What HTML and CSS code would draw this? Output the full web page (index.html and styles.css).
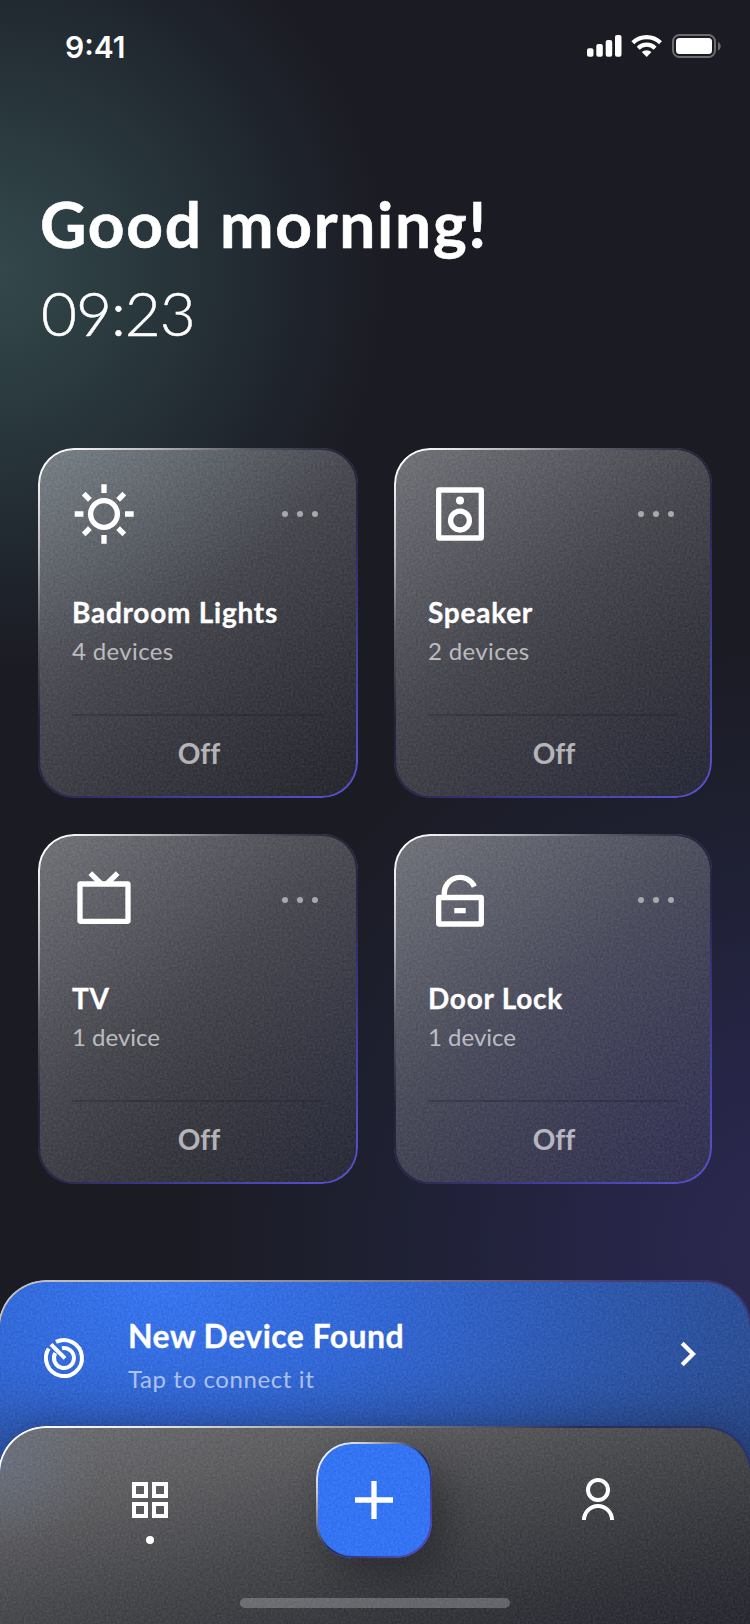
FILE: index.html
```html
<!DOCTYPE html>
<html lang="en">
<head>
<meta charset="utf-8">
<title>Smart Home</title>
<link rel="stylesheet" href="styles.css">
</head>
<body>
<svg class="defs" width="0" height="0" aria-hidden="true">
  <filter id="noise" x="0" y="0" width="100%" height="100%" color-interpolation-filters="sRGB">
    <feTurbulence type="fractalNoise" baseFrequency="0.45" numOctaves="2" seed="4"/>
    <feColorMatrix values="1.6 0 0 0 -0.45  1.6 0 0 0 -0.45  1.6 0 0 0 -0.42  0 0 0 0 1"/>
  </filter>
</svg>
<div class="screen">
  <header class="status">
    <span class="clock">9:41</span>
    <svg class="status-icons" width="136" height="26" viewBox="0 0 136 26" fill="#fff">
      <rect x="0" y="15.300" width="6.500" height="8.500" rx="2"/>
      <rect x="9.300" y="11" width="6.500" height="12.800" rx="2"/>
      <rect x="18.700" y="7" width="6.500" height="16.800" rx="2"/>
      <rect x="28" y="2" width="6.500" height="21.800" rx="2"/>
      <g fill="none" stroke="#fff" stroke-width="4.200">
        <path d="M45.800 9.700a20 20 0 0 1 27.700 0"/>
        <path d="M51.200 15.200a12 12 0 0 1 16.900 0"/>
      </g>
      <path d="M54.800 19.100a7 7 0 0 1 9.700 0l-4.850 4.800z"/>
      <rect x="86" y="2" width="42" height="22" rx="6.500" fill="none" stroke="#6c6c70" stroke-width="2"/>
      <rect x="89" y="5" width="36" height="16" rx="3.500"/>
      <path d="M131 9v8.500c3.600-1.500 3.600-7 0-8.500z" fill="#6c6c70"/>
    </svg>
  </header>

  <section class="greeting">
    <h1 class="hello">Good morning!</h1>
    <p class="time">09:23</p>
  </section>

  <main class="cards">
    <article class="card glass">
      <svg class="grain"><rect width="100%" height="100%" filter="url(#noise)"/></svg>
      <div class="card-top">
        <svg class="icon" width="64" height="64" viewBox="0 0 64 64" fill="none" stroke="#fff" stroke-width="5.300">
          <circle cx="32" cy="32" r="13.400"/>
          <path d="M32 2.300v8.700M32 53v8.700M2.700 32h8.700M53 32h8.700M11.700 11.700l6.200 6.200M46.100 46.100l6.200 6.200M52.300 11.700l-6.200 6.200M17.900 46.100l-6.200 6.200"/>
        </svg>
        <span class="dots"><i></i><i></i><i></i></span>
      </div>
      <h2 class="card-title">Badroom Lights</h2>
      <p class="card-sub plural">4 devices</p>
      <div class="card-foot">Off</div>
    </article>

    <article class="card glass">
      <svg class="grain"><rect width="100%" height="100%" filter="url(#noise)"/></svg>
      <div class="card-top">
        <svg class="icon" width="64" height="64" viewBox="0 0 64 64" fill="none" stroke="#fff" stroke-width="5.300">
          <rect x="10.700" y="8" width="42.600" height="48" rx="0.500" stroke-linejoin="round"/>
          <circle cx="32" cy="38.600" r="9.400"/>
          <circle cx="32" cy="18.600" r="4" fill="#fff" stroke="none"/>
        </svg>
        <span class="dots"><i></i><i></i><i></i></span>
      </div>
      <h2 class="card-title">Speaker</h2>
      <p class="card-sub plural">2 devices</p>
      <div class="card-foot">Off</div>
    </article>

    <article class="card glass">
      <svg class="grain"><rect width="100%" height="100%" filter="url(#noise)"/></svg>
      <div class="card-top">
        <svg class="icon" width="64" height="64" viewBox="0 0 64 64" fill="none" stroke="#fff" stroke-width="5.300">
          <rect x="8" y="16" width="48" height="37.300" rx="0.500" stroke-linejoin="round"/>
          <path d="M18.300 5.200l11 10.800M45.700 5.200L34.700 16"/>
        </svg>
        <span class="dots"><i></i><i></i><i></i></span>
      </div>
      <h2 class="card-title">TV</h2>
      <p class="card-sub">1 device</p>
      <div class="card-foot">Off</div>
    </article>

    <article class="card glass">
      <svg class="grain"><rect width="100%" height="100%" filter="url(#noise)"/></svg>
      <div class="card-top">
        <svg class="icon" width="64" height="64" viewBox="0 0 64 64" fill="none" stroke="#fff" stroke-width="5.300">
          <rect x="10.700" y="29.500" width="42.600" height="26.500" rx="0.500" stroke-linejoin="round"/>
          <path d="M16.300 29v-3.300a15.700 15.700 0 0 1 30-7.100M26.300 42.600h11.400"/>
        </svg>
        <span class="dots"><i></i><i></i><i></i></span>
      </div>
      <h2 class="card-title">Door Lock</h2>
      <p class="card-sub">1 device</p>
      <div class="card-foot">Off</div>
    </article>
  </main>

  <section class="found glass">
    <svg class="grain"><rect width="100%" height="100%" filter="url(#noise)"/></svg>
    <svg class="radar" width="48" height="48" viewBox="0 0 48 48" fill="none" stroke="#fff" stroke-width="4">
      <path d="M16 7.900A18 18 0 1 1 8.700 14.500"/>
      <path d="M22 14.200A10 10 0 1 1 15.300 19"/>
      <path d="M11 10.400L25 24.400"/>
    </svg>
    <div class="found-text">
      <h2 class="found-title">New Device Found</h2>
      <p class="found-sub">Tap to connect it</p>
    </div>
    <svg class="chevron" width="24" height="32" viewBox="0 0 24 32" fill="none" stroke="#fff" stroke-width="4.200">
      <path d="M5.200 5.200L16 16L5.200 26.800"/>
    </svg>
  </section>

  <nav class="nav glass">
    <svg class="grain"><rect width="100%" height="100%" filter="url(#noise)"/></svg>
    <div class="tab home">
      <svg width="36" height="36" viewBox="0 0 36 36" fill="none" stroke="#fff" stroke-width="4">
        <path d="M2 2h12v12H2zM22 2h12v12H22zM2 22h12v12H2zM22 22h12v12H22z"/>
      </svg>
      <i class="active-dot"></i>
    </div>
    <div class="add glass">
      <svg class="grain"><rect width="100%" height="100%" filter="url(#noise)"/></svg>
      <svg width="38" height="38" viewBox="0 0 38 38" stroke="#fff" stroke-width="5.300"><path d="M19 0v38M0 19h38"/></svg>
    </div>
    <div class="tab user">
      <svg width="32" height="42" viewBox="0 0 32 42" fill="none" stroke="#fff" stroke-width="4">
        <circle cx="16" cy="12" r="10"/>
        <path d="M2 42a14 14 0 0 1 28 0"/>
      </svg>
    </div>
    <i class="home-bar"></i>
  </nav>
</div>
</body>
</html>
```
FILE: styles.css
```css
* { box-sizing: border-box; margin: 0; padding: 0; }
body { background: #1b1b23; color: #fff; font-family: Lato, "Open Sans", sans-serif; font-variant-ligatures: none; }
.defs { position: absolute; }
.screen {
  display: flex; flex-direction: column;
  width: 750px; height: 1624px; overflow: hidden;
  background:
    radial-gradient(ellipse 400px 400px at -10px 270px, #34494d 0%, #28363b 42%, #1f242c 78%, rgba(27,27,35,0) 100%),
    radial-gradient(ellipse 620px 620px at 790px 1250px, #2d2950 0%, #262547 28%, #1e2031 68%, rgba(27,27,35,0) 100%),
    #1b1b23;
}

.status {
  display: flex; justify-content: space-between; align-items: flex-start;
  height: 180px; padding: 28px 27px 0 65px;
}
.clock { font: 600 30px/38px Inter, sans-serif; }
.status-icons { margin-top: 5px; }

.greeting { height: 268px; padding-left: 40px; }
.hello { font-size: 64px; line-height: 88px; font-weight: 700; letter-spacing: 1.7px; white-space: nowrap; -webkit-text-stroke: .6px #fff; }
.time { font-size: 62px; line-height: 88px; font-weight: 300; letter-spacing: -1px; padding-left: 1px; -webkit-text-stroke: .5px #fff; }

/* Frosted surface: grain plus a rim lit from the top left */
.glass { position: relative; isolation: isolate; }
.glass::before {
  content: ""; position: absolute; inset: 0; z-index: 1; padding: 2px; border-radius: inherit;
  background: linear-gradient(138deg, #fff 3%, #b4b4b8 17%, #5d5b68 29%, #262338 43%, #29264f 56%, #423e9c 76%, #5850cc 97%);
  mask: linear-gradient(#000 0 0) content-box exclude, linear-gradient(#000 0 0);
  pointer-events: none;
}
.grain {
  position: absolute; inset: 0; z-index: -1; width: 100%; height: 100%;
  border-radius: inherit; overflow: hidden; opacity: .07;
}

.cards { display: grid; grid-template-columns: 320px 318px; gap: 36px; padding-left: 38px; }
.card {
  height: 350px; padding: 34px; border-radius: 36px;
  background: linear-gradient(142deg, rgba(248,251,255,.4) 2%, rgba(248,251,255,.2) 46%, rgba(248,251,255,.13) 68%, rgba(248,251,255,.04) 100%);
}
.card-top { display: flex; align-items: center; gap: 146px; height: 64px; }
.icon { flex: none; }
.dots { display: flex; gap: 9px; }
.dots i { width: 6px; height: 6px; border-radius: 50%; background: #a9a9ac; }
.card-title { margin-top: 47px; font-size: 28px; line-height: 38px; font-weight: 700; letter-spacing: .75px; white-space: nowrap; -webkit-text-stroke: .3px #fff; }
.card-sub { margin-top: 1px; font-size: 24px; line-height: 38px; color: rgba(255,255,255,.64); }
.plural { letter-spacing: .35px; }
.card-foot {
  margin-top: 44px; padding: 12px 0 0 2px; border-top: 2px solid rgba(30,30,36,.3);
  font-size: 28px; line-height: 50px; font-weight: 700; text-align: center; color: rgba(255,255,255,.64);
}

.found {
  display: flex; align-items: flex-start; flex: none;
  height: 344px; margin-top: 96px; padding: 36px 49px 0 40px; border-radius: 48px 48px 0 0;
  background:
    linear-gradient(180deg, rgba(20,30,60,0) 85px, rgba(20,30,60,.12) 150px, rgba(20,30,60,.3) 230px),
    radial-gradient(ellipse 700px 400px at 165px 10px, #3678fb 0%, #3069de 30%, #2c58b0 65%, #28488a 100%);
}
.found::before {
  inset: 0 -2px -2px;
  background: linear-gradient(97deg, #c4c4c4 0%, #b0afb4 20%, #77748a 50%, #443d72 78%, #38306c 100%);
}
.radar { margin-top: 18px; }
.found-text { flex: 1; margin-left: 40px; }
.found-title { font-size: 32px; line-height: 40px; font-weight: 700; letter-spacing: .45px; white-space: nowrap; -webkit-text-stroke: .3px #fff; }
.found-sub { margin-top: 3px; font-size: 24px; line-height: 40px; letter-spacing: .6px; color: rgba(255,255,255,.6); }
.chevron { margin: 22px 0 0; }

.nav {
  flex: none; display: grid; grid-template-columns: 36px 116px 32px;
  column-gap: 148px; align-items: start;
  height: 198px; margin-top: -198px; padding: 16px 0 0 132px; border-radius: 48px 48px 0 0;
  background:
    radial-gradient(ellipse 100px 80px at 0 40px, rgba(110,125,155,.4), rgba(110,125,155,0)),
    linear-gradient(166deg, #717275 0%, #5f5f62 26%, #48494c 50%, #33343a 78%, #26272f 100%);
  box-shadow: 0 -4px 28px rgba(20,25,45,.3);
}
.nav::before {
  inset: 0 -2px -2px;
  background: linear-gradient(97deg, #fff 0%, #ececec 18%, #98989c 45%, #55556a 62%, #2a2c58 75%, #29346e 100%);
}
.tab { display: flex; flex-direction: column; align-items: center; }
.home { padding-top: 40px; }
.active-dot { width: 8px; height: 8px; margin-top: 18px; border-radius: 50%; background: #fff; }
.add {
  display: flex; align-items: center; justify-content: center;
  width: 116px; height: 116px; border-radius: 36px;
  background: #3277ff; box-shadow: 14px 20px 40px rgba(20,20,26,.45);
}
.add::before {
  background: linear-gradient(135deg, #fff 5%, #c8c8cc 22%, #55536a 42%, #28264c 52%, #4540a0 75%, #5b4bc0 100%);
}
.user { margin-left: 2px; width: 32px; padding-top: 36px; }
.home-bar {
  position: absolute; left: 240px; bottom: 16px; width: 270px; height: 10px;
  border-radius: 5px; background: rgba(255,255,255,.24);
}
```
